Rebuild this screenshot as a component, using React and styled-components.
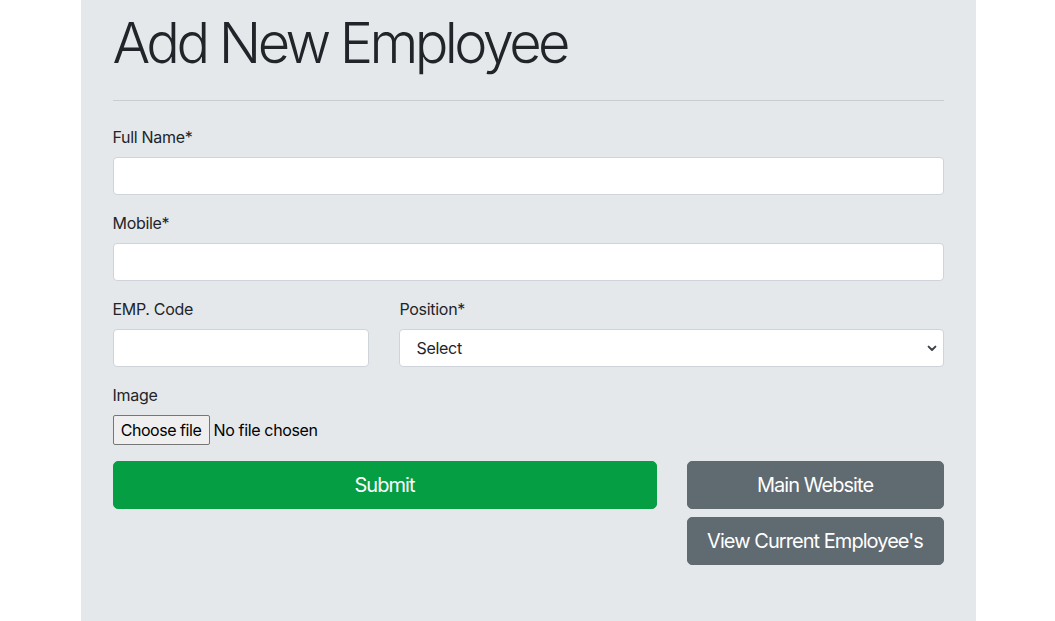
import React from "react";
import styled, { createGlobalStyle } from "styled-components";

const GlobalStyle = createGlobalStyle`
  html, body { margin: 0; padding: 0; background: #ffffff; }
  body {
    padding-left: 1px;
    font-family: Inter, "Liberation Sans", Arial, sans-serif;
    color: #212529;
    font-size: 16px;
    line-height: 1.5;
  }
  * { box-sizing: border-box; }
`;

const Panel = styled.main`
  width: 895px;
  min-height: 621px;
  margin: 0 auto;
  padding: 10px 32px 24px;
  background: #e4e8eb;
`;

const Title = styled.h1`
  margin: 0;
  font-size: 56px;
  font-weight: 300;
  line-height: 1.2;
  letter-spacing: -3.6px;
  color: #212529;
`;

const Divider = styled.hr`
  margin: 23px 0 24px;
  border: 0;
  border-top: 1px solid #c9cdd1;
`;

const Form = styled.form`
  display: flex;
  flex-direction: column;
`;

const FieldGroup = styled.div`
  display: flex;
  flex-direction: column;
  margin-bottom: 16px;
`;

const Label = styled.label`
  display: block;
  margin-bottom: 8px;
  font-size: 16px;
  line-height: 24px;
  letter-spacing: -0.3px;
  color: #212529;
`;

const TextInput = styled.input`
  width: 100%;
  height: 38px;
  padding: 6px 12px;
  font: inherit;
  color: #495057;
  background: #ffffff;
  border: 1px solid #ced4da;
  border-radius: 4px;
  outline: none;
`;

const Select = styled.select`
  width: 100%;
  height: 38px;
  padding: 6px 32px 6px 16px;
  font: inherit;
  letter-spacing: -0.3px;
  color: #212529;
  background: #ffffff
    url("data:image/svg+xml,%3Csvg xmlns='http://www.w3.org/2000/svg' width='10' height='7' viewBox='0 0 10 7'%3E%3Cpath d='M1.6 1.6L5 5l3.4-3.4' fill='none' stroke='%23404448' stroke-width='2' stroke-linecap='round' stroke-linejoin='round'/%3E%3C/svg%3E")
    no-repeat right 6px center;
  border: 1px solid #ced4da;
  border-radius: 4px;
  appearance: none;
  -webkit-appearance: none;
  outline: none;
`;

const SplitRow = styled.div`
  display: grid;
  grid-template-columns: calc((100% + 30px) / 3 - 30px) 1fr;
  column-gap: 30px;
`;

const FileRow = styled.div`
  display: flex;
  align-items: center;
  gap: 4px;
  height: 30px;
`;

const FileButton = styled.label`
  display: inline-flex;
  align-items: center;
  justify-content: center;
  width: 97px;
  height: 30px;
  padding: 0;
  font-size: 16px;
  letter-spacing: -0.45px;
  color: #000000;
  background: #efefef;
  border: 1px solid #767676;
  border-radius: 2px;
  cursor: default;
`;

const HiddenFile = styled.input`
  display: none;
`;

const FileStatus = styled.span`
  font-size: 16px;
  letter-spacing: -0.35px;
  color: #000000;
`;

const ActionRow = styled.div`
  display: grid;
  grid-template-columns: 1fr calc((100% + 30px) / 3 - 30px);
  column-gap: 30px;
  align-items: start;
`;

const ButtonStack = styled.div`
  display: flex;
  flex-direction: column;
  gap: 8px;
`;

const Button = styled.button`
  width: 100%;
  height: 48px;
  padding: 0 8px;
  font-family: inherit;
  font-size: 20px;
  font-weight: 400;
  line-height: 1.5;
  letter-spacing: -0.95px;
  white-space: nowrap;
  color: #ffffff;
  background: ${(p) => (p.$variant === "success" ? "#069e43" : "#5f6a71")};
  border: 1px solid ${(p) => (p.$variant === "success" ? "#069e43" : "#5f6a71")};
  border-radius: 5px;
  cursor: pointer;
`;

export default function App() {
  return (
    <>
      <GlobalStyle />
      <Panel>
        <Title>Add New Employee</Title>
        <Divider />
        <Form onSubmit={(e) => e.preventDefault()}>
          <FieldGroup>
            <Label htmlFor="fullName">Full Name*</Label>
            <TextInput id="fullName" type="text" />
          </FieldGroup>
          <FieldGroup>
            <Label htmlFor="mobile">Mobile*</Label>
            <TextInput id="mobile" type="text" />
          </FieldGroup>
          <SplitRow>
            <FieldGroup>
              <Label htmlFor="empCode">EMP. Code</Label>
              <TextInput id="empCode" type="text" />
            </FieldGroup>
            <FieldGroup>
              <Label htmlFor="position">Position*</Label>
              <Select id="position" defaultValue="">
                <option value="">Select</option>
              </Select>
            </FieldGroup>
          </SplitRow>
          <FieldGroup>
            <Label>Image</Label>
            <FileRow>
              <FileButton>
                Choose file
                <HiddenFile type="file" />
              </FileButton>
              <FileStatus>No file chosen</FileStatus>
            </FileRow>
          </FieldGroup>
          <ActionRow>
            <Button type="submit" $variant="success">Submit</Button>
            <ButtonStack>
              <Button type="button">Main Website</Button>
              <Button type="button">View Current Employee's</Button>
            </ButtonStack>
          </ActionRow>
        </Form>
      </Panel>
    </>
  );
}
